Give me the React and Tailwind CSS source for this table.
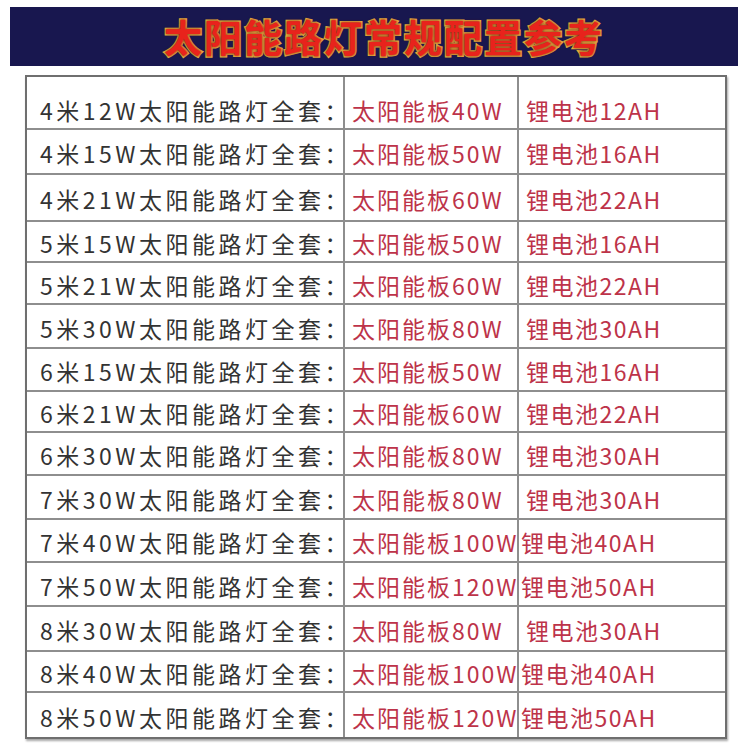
const rows = [
  ["4米12W太阳能路灯全套：", "太阳能板40W", "锂电池12AH", 55],
  ["4米15W太阳能路灯全套：", "太阳能板50W", "锂电池16AH", 45],
  ["4米21W太阳能路灯全套：", "太阳能板60W", "锂电池22AH", 47],
  ["5米15W太阳能路灯全套：", "太阳能板50W", "锂电池16AH", 41],
  ["5米21W太阳能路灯全套：", "太阳能板60W", "锂电池22AH", 42],
  ["5米30W太阳能路灯全套：", "太阳能板80W", "锂电池30AH", 44],
  ["6米15W太阳能路灯全套：", "太阳能板50W", "锂电池16AH", 43],
  ["6米21W太阳能路灯全套：", "太阳能板60W", "锂电池22AH", 41],
  ["6米30W太阳能路灯全套：", "太阳能板80W", "锂电池30AH", 43],
  ["7米30W太阳能路灯全套：", "太阳能板80W", "锂电池30AH", 44],
  ["7米40W太阳能路灯全套：", "太阳能板100W", "锂电池40AH", 43],
  ["7米50W太阳能路灯全套：", "太阳能板120W", "锂电池50AH", 44],
  ["8米30W太阳能路灯全套：", "太阳能板80W", "锂电池30AH", 45],
  ["8米40W太阳能路灯全套：", "太阳能板100W", "锂电池40AH", 41],
  ["8米50W太阳能路灯全套：", "太阳能板120W", "锂电池50AH", 44],
];

export default function App() {
  return (
    <div className="w-[750px] h-[750px] bg-white overflow-hidden font-['Noto_Sans_CJK_SC',sans-serif]">
      {/* title banner */}
      <div className="ml-[10px] mt-[7px] w-[728px] h-[59px] bg-[#18174f] flex items-center justify-center pb-[2px] pl-[20px]">
        <span className="text-[38px] leading-none font-bold tracking-[2px] text-[#e8231c] [-webkit-text-stroke:3px_#eeb540] [paint-order:stroke_fill] [text-shadow:0_0_3px_#6a1a12]">
          太阳能路灯常规配置参考
        </span>
      </div>

      {/* config table */}
      <div className="ml-[25px] mt-[9px] w-[702px] border-2 border-[#6f6f6f] shadow-[1px_2px_2px_rgba(0,0,0,0.35)] bg-white">
        {rows.map(([a, b, c, h], i) => {
          const wide = b.length > 7;
          return (
            <div
              key={i}
              style={{ height: h - (i === 0 ? 2 : 0) }}
              className={`flex ${i < rows.length - 1 ? "border-b-2 border-[#8e8e8e]" : ""}`}
            >
              <div
                className={`w-[318px] flex items-center pl-[13px] border-r-2 border-[#8e8e8e] text-[23px] leading-none tracking-[3.5px] text-[#333333] whitespace-nowrap ${i === 0 ? "pt-[16px]" : "pt-[4px]"}`}
              >
                {a}
              </div>
              <div
                className={`w-[174px] flex items-center pl-[7px] border-r-2 border-[#8e8e8e] text-[23px] leading-none tracking-[2px] text-[#bd3349] whitespace-nowrap overflow-visible ${i === 0 ? "pt-[16px]" : "pt-[4px]"}`}
              >
                {b}
              </div>
              <div
                className={`flex-1 flex items-center ${wide ? "pl-[2px]" : "pl-[7px]"} text-[23px] leading-none tracking-[1.5px] text-[#bd3349] whitespace-nowrap ${i === 0 ? "pt-[16px]" : "pt-[4px]"}`}
              >
                {c}
              </div>
            </div>
          );
        })}
      </div>
    </div>
  );
}
